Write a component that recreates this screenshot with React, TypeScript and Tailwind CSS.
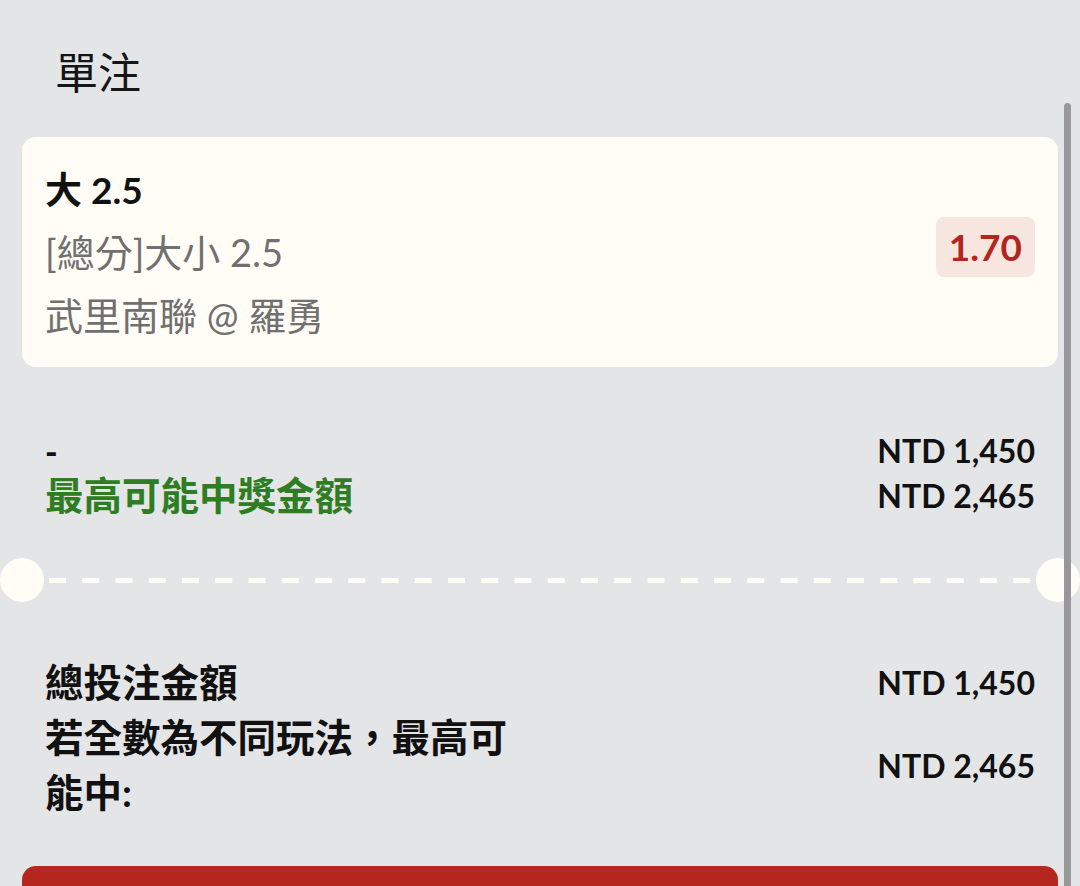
import React from "react";

const latin = "font-['Lato','Noto_Sans_CJK_TC',sans-serif]";
const cjk = "font-['Noto_Sans_CJK_TC','Lato',sans-serif]";

export default function App() {
  return (
    <div
      className={`relative w-[1080px] h-[886px] overflow-hidden bg-[#e4e5e7] ${latin}`}
    >
      <div className="px-[22px]">
        {/* Title */}
        <div
          className={`pt-[38px] pl-[33px] text-[43px] leading-[64px] text-[#151515] ${cjk}`}
        >
          單注
        </div>

        {/* Selection card */}
        <div className="mt-[35px] flex items-start justify-between rounded-[14px] bg-[#fffdf5] pl-[23px] pr-[23px] pt-[22px] pb-[19px]">
          <div className="flex flex-col">
            <div className="text-[37px] leading-[62px] font-bold text-[#111]">
              大 2.5
            </div>
            <div className="text-[38px] leading-[62px] font-normal text-[#707070]">
              [總分]大小 2.5
            </div>
            <div className="text-[38px] leading-[65px] font-normal text-[#707070]">
              武里南聯 @ 羅勇
            </div>
          </div>
          <div className="mt-[58px] flex h-[60px] items-center rounded-[8px] bg-[#f7e5e0] px-[13px] text-[37px] font-bold text-[#b3261e]">
            1.70
          </div>
        </div>

        {/* Stake / max win */}
        <div className="mt-[61px] flex justify-between px-[23px]">
          <div className="flex flex-col">
            <div className="text-[34px] leading-[45px] font-black text-[#111]">
              -
            </div>
            <div className="text-[38.5px] leading-[45px] font-bold text-[#2e7d22]">
              最高可能中獎金額
            </div>
          </div>
          <div className="flex flex-col items-end text-[32px] leading-[45px] font-bold text-[#111]">
            <div>NTD 1,450</div>
            <div>NTD 2,465</div>
          </div>
        </div>

        {/* Separator */}
        <div className="relative mt-[40px] flex h-[44px] items-center">
          <div className="absolute left-[-22px] top-0 h-[44px] w-[44px] rounded-full bg-[#fffdf5]" />
          <div className="absolute right-[-22px] top-0 h-[44px] w-[44px] rounded-full bg-[#fffdf5]" />
          <svg
            className="ml-[27px] mr-[27px] h-[5px] flex-1"
            preserveAspectRatio="none"
          >
            <line
              x1="0"
              y1="2.5"
              x2="100%"
              y2="2.5"
              stroke="#fffdf5"
              strokeWidth="5"
              strokeDasharray="17 16.25"
            />
          </svg>
        </div>

        {/* Totals */}
        <div className="mt-[53px] flex flex-col px-[23px]">
          <div className="flex items-center justify-between">
            <div className="text-[38.5px] leading-[55px] font-bold text-[#111]">
              總投注金額
            </div>
            <div className="text-[32px] leading-[55px] font-bold text-[#111]">
              NTD 1,450
            </div>
          </div>
          <div className="flex items-center justify-between">
            <div className="w-[480px] text-[38.5px] leading-[55px] font-bold text-[#111]">
              若全數為不同玩法，最高可能中:
            </div>
            <div className="text-[32px] leading-[55px] font-bold text-[#111]">
              NTD 2,465
            </div>
          </div>
        </div>

        {/* Button */}
        <div className="mt-[46px] h-[100px] rounded-t-[14px] bg-[#b5261e]" />
      </div>

      {/* Scrollbar */}
      <div className="absolute left-[1064px] top-[103px] h-[800px] w-[7px] rounded-full bg-[#98989b]" />
    </div>
  );
}
